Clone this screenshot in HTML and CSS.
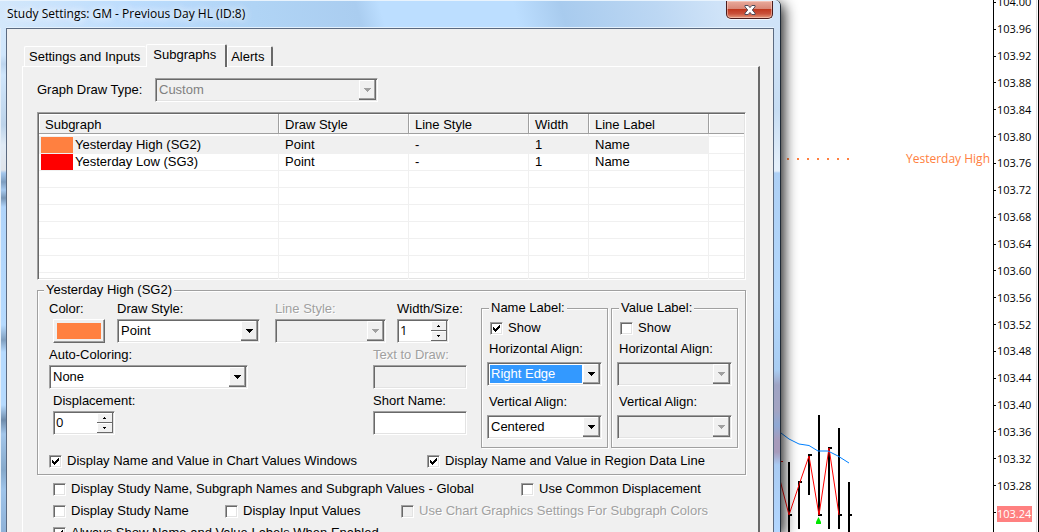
FILE: index.html
```html
<!DOCTYPE html>
<html lang="en">
<head>
    <meta charset="UTF-8">
    <meta name="viewport" content="width=device-width, initial-scale=1.0">
    <title>Study Settings</title>
    <link rel="stylesheet" href="styles.css">
</head>
<body>
    <main class="dialog">
        <header class="title-bar">
            <h1>Study Settings: GM - Previous Day HL (ID:8)</h1>
            <button class="close-btn" type="button" aria-label="Close">
                <svg width="12" height="10" viewBox="0 0 12 10">
                    <path d="M1 .5h3.2L6 2.6 7.8.5H11v1.3L8.3 5 11 8.2v1.3H7.8L6 7.4 4.2 9.5H1V8.2L3.7 5 1 1.8z" fill="#fff" stroke="#4c4a58"/>
                </svg>
            </button>
        </header>

        <form class="client">
            <div class="tabs" role="tablist">
                <button class="tab" type="button" role="tab">Settings and Inputs</button>
                <button class="tab active" type="button" role="tab" aria-selected="true">Subgraphs</button>
                <button class="tab" type="button" role="tab">Alerts</button>
            </div>

            <div class="tab-page">
                <div class="draw-type">
                    <label for="graphDrawType">Graph Draw Type:</label>
                    <select id="graphDrawType" disabled><option>Custom</option></select>
                </div>

                <div class="list-view">
                    <table>
                        <colgroup>
                            <col class="col-name"><col class="col-draw"><col class="col-line"><col class="col-width"><col class="col-label"><col>
                        </colgroup>
                        <thead>
                            <tr><th>Subgraph</th><th>Draw Style</th><th>Line Style</th><th>Width</th><th>Line Label</th><th></th></tr>
                        </thead>
                        <tbody>
                            <tr class="gap"><td></td><td></td><td></td><td></td><td></td><td></td></tr>
                            <tr class="selected"><td><span class="swatch high"></span>Yesterday High (SG2)</td><td>Point</td><td>-</td><td>1</td><td>Name</td><td></td></tr>
                            <tr><td><span class="swatch low"></span>Yesterday Low (SG3)</td><td>Point</td><td>-</td><td>1</td><td>Name</td><td></td></tr>
                            <tr><td></td><td></td><td></td><td></td><td></td><td></td></tr>
                            <tr><td></td><td></td><td></td><td></td><td></td><td></td></tr>
                            <tr><td></td><td></td><td></td><td></td><td></td><td></td></tr>
                            <tr><td></td><td></td><td></td><td></td><td></td><td></td></tr>
                            <tr><td></td><td></td><td></td><td></td><td></td><td></td></tr>
                            <tr><td></td><td></td><td></td><td></td><td></td><td></td></tr>
                            <tr><td></td><td></td><td></td><td></td><td></td><td></td></tr>
                        </tbody>
                    </table>
                </div>

                <fieldset class="subgraph">
                    <legend>Yesterday High (SG2)</legend>
                    <div class="settings">
                        <div class="fields">
                            <div class="field">
                                <label for="color">Color:</label>
                                <button id="color" class="color-btn indent" type="button"></button>
                            </div>
                            <div class="field draw-style">
                                <label for="drawStyle">Draw Style:</label>
                                <select id="drawStyle"><option>Point</option></select>
                            </div>
                            <div class="field line-style disabled">
                                <label for="lineStyle">Line Style:</label>
                                <select id="lineStyle" disabled><option></option></select>
                            </div>
                            <div class="field">
                                <label for="widthSize">Width/Size:</label>
                                <input id="widthSize" class="spin narrow" type="number" value="1">
                            </div>
                            <div class="field auto-coloring">
                                <label for="autoColoring">Auto-Coloring:</label>
                                <select id="autoColoring"><option>None</option></select>
                            </div>
                            <div class="field text-field disabled">
                                <label for="textToDraw">Text to Draw:</label>
                                <input id="textToDraw" type="text" disabled>
                            </div>
                            <div class="field displacement">
                                <label for="displacement" class="indent">Displacement:</label>
                                <input id="displacement" class="spin indent" type="number" value="0">
                            </div>
                            <div class="field text-field">
                                <label for="shortName">Short Name:</label>
                                <input id="shortName" type="text">
                            </div>
                        </div>

                        <fieldset class="label-box">
                            <legend>Name Label:</legend>
                            <label class="check"><input type="checkbox" checked>Show</label>
                            <div class="field">
                                <label for="nameHorizontal">Horizontal Align:</label>
                                <select id="nameHorizontal" class="focused"><option>Right Edge</option></select>
                            </div>
                            <div class="field">
                                <label for="nameVertical">Vertical Align:</label>
                                <select id="nameVertical"><option>Centered</option></select>
                            </div>
                        </fieldset>

                        <fieldset class="label-box">
                            <legend>Value Label:</legend>
                            <label class="check"><input type="checkbox">Show</label>
                            <div class="field">
                                <label for="valueHorizontal">Horizontal Align:</label>
                                <select id="valueHorizontal" disabled><option></option></select>
                            </div>
                            <div class="field">
                                <label for="valueVertical">Vertical Align:</label>
                                <select id="valueVertical" disabled><option></option></select>
                            </div>
                        </fieldset>
                    </div>
                    <div class="display-options">
                        <label class="check"><input type="checkbox" checked>Display Name and Value in Chart Values Windows</label>
                        <label class="check"><input type="checkbox" checked>Display Name and Value in Region Data Line</label>
                    </div>
                </fieldset>

                <div class="study-options">
                    <label class="check global"><input type="checkbox">Display Study Name, Subgraph Names and Subgraph Values - Global</label>
                    <label class="check"><input type="checkbox">Use Common Displacement</label>
                    <label class="check"><input type="checkbox">Display Study Name</label>
                    <label class="check"><input type="checkbox">Display Input Values</label>
                    <label class="check graphics disabled"><input type="checkbox" disabled>Use Chart Graphics Settings For Subgraph Colors</label>
                    <label class="check global"><input type="checkbox" checked>Always Show Name and Value Labels When Enabled</label>
                </div>
            </div>
        </form>
    </main>

    <section class="chart">
        <svg class="plot" width="212" height="532" viewBox="0 0 212 532">
            <!-- price bars with closing ticks -->
            <path d="M7.500 462v70M17.500 482v47M27.500 455v40M37.500 415v101M47.500 448v81M57.500 428v101M67.500 482v50M7 515h4M17 482h4M27 455h4M37 515h4M47 448h4M57 515h4M67 515h4" stroke="#000" stroke-width="2" fill="none" shape-rendering="crispEdges"/>
            <path d="M-1 480L8 515 19 482 28 456 38 515 48 448 58 515M0 461.500h2" stroke="#f00" fill="none"/>
            <path d="M0 433l8 6 10 5 10 1.500 9 5.500h10l10 5 11 7" stroke="#0080ff" fill="none"/>
            <path d="M37.500 517l2.500 5v2h-5v-2z" fill="#00e600"/>
            <!-- yesterday high points -->
            <path d="M6 159h64" stroke="#ff8040" stroke-width="2" stroke-dasharray="2 8" fill="none"/>
            <text x="209" y="163" text-anchor="end">Yesterday High</text>
        </svg>
        <ul class="price-axis">
            <li>104.00</li>
            <li>103.96</li>
            <li>103.92</li>
            <li>103.88</li>
            <li>103.84</li>
            <li>103.80</li>
            <li>103.76</li>
            <li>103.72</li>
            <li>103.68</li>
            <li>103.64</li>
            <li>103.60</li>
            <li>103.56</li>
            <li>103.52</li>
            <li>103.48</li>
            <li>103.44</li>
            <li>103.40</li>
            <li>103.36</li>
            <li>103.32</li>
            <li>103.28</li>
            <li><span class="last-price">103.24</span></li>
        </ul>
    </section>
</body>
</html>
```
FILE: styles.css
```css
* {
    box-sizing: border-box;
}
body {
    display: flex;
    height: 100vh;
    margin: 0;
    overflow: hidden;
    background: #fff;
    color: #000;
    font: 13px/16px "Liberation Sans", Arial, sans-serif;
}
button, input, select {
    font: inherit;
    color: inherit;
    margin: 0;
}

/* Window frame */
.dialog {
    position: relative;
    z-index: 1;
    flex: 1;
    min-width: 0;
    display: flex;
    flex-direction: column;
    padding: 0 6px;
    border-right: 1px solid #1f2a36;
    border-top-right-radius: 6px;
    background:
        linear-gradient(#e4eef8, #e4eef8) left / 1px 100% no-repeat,
        linear-gradient(#d0e3f7 0, #cfe2f6 50px, #c6dcf2 110px, #e4effa 165px, #e4effa 171px, #aed0f5 173px, #b3d7fb 300px, #a9cdf2 370px, #9fa4c4 385px, #a3a4c2 410px, #8fa9d4 425px, #a79bbb 440px, #a79bbb 452px, #a9cbf2 465px, #b3d7ff) right / 7px 100% no-repeat,
        linear-gradient(#d6e9fb 0, #d0e6fc 55px, #bdd5ee 64px, #d0e6fc 75px, #c3d9ef 110px, #bcd3ea 125px, #e0ebf6 145px, #e0e4ea 170px, #a3c6ec 173px, #7d9dbf 182px, #a6c9ee 190px, #7896b6 198px, #b0d4fa 207px, #b6dafe 325px, #809fbf 340px, #b6dafe 352px, #b6dafe 405px, #6f8cab 420px, #a3c6ea 434px, #86a9cb 470px, #9fc4ea 490px, #8fb2d8 100%) left / 7px 100% no-repeat,
        #bbdcfd;
    box-shadow: 3px 4px 14px rgba(0, 0, 0, 0.9);
}
.title-bar {
    flex: none;
    display: flex;
    justify-content: space-between;
    align-items: flex-start;
    height: 28px;
    margin: 0 -6px;
    padding: 0 7px;
    border-top: 1px solid #e8f3fd;
    border-top-right-radius: 6px;
    background: linear-gradient(75deg, #d4e8fb 0, #bbdcfd 18%, #b0d4f5 33%, #aacdf0 46%, #bcdeff 49%, #bcdeff 66%, #a8cbee 72%, #bcd7f3 84%, #cfe3f8 92%);
}
.title-bar h1 {
    margin: 0;
    font: 12px/25px "Open Sans", sans-serif;
    text-shadow: 0 0 8px #fff, 0 0 8px #fff;
}
.close-btn {
    display: flex;
    justify-content: center;
    align-items: center;
    width: 47px;
    height: 18px;
    padding: 0;
    border: 1px solid #4a1c1c;
    border-top: 0;
    border-radius: 0 0 5px 5px;
    background: linear-gradient(#e9aa9c 0, #d98878 45%, #c0391f 50%, #c9513a 75%, #e39a7c 100%);
    box-shadow: inset 0 0 0 1px rgba(255, 220, 210, 0.5), 0 1px 0 #f4faff;
}
.client {
    flex: 1;
    min-height: 0;
    display: flex;
    flex-direction: column;
    padding: 15px 13px 0 15px;
    overflow: hidden;
    border: 1px solid #5b6a80;
    border-bottom: 0;
    background: #f0f0f0;
    box-shadow: 0 -1px 0 #e4f1fd;
}

/* Tabs */
.tabs {
    flex: none;
    display: flex;
    align-items: flex-end;
    padding-left: 2px;
}
.tab {
    height: 20px;
    padding: 0 7px 0 3px;
    border: 1px solid #fff;
    border-right: 2px solid #696969;
    border-bottom: 0;
    border-radius: 2px 2px 0 0;
    background: #f0f0f0;
    white-space: nowrap;
}
.tab:first-child {
    padding: 0 6px 0 4px;
    border-right: 0;
}
.tab.active {
    position: relative;
    height: 23px;
    margin-bottom: -1px;
    padding: 0 9px 2px 6px;
}
.tab-page {
    flex: 1;
    min-height: 0;
    padding: 11px 12px 0 14px;
    border: 1px solid #fff;
    border-right: 2px solid #696969;
    border-bottom: 0;
}

/* Sunken controls */
select, input, .list-view {
    appearance: none;
    border: 1px solid;
    border-color: #a0a0a0 #fff #fff #a0a0a0;
    border-radius: 0;
    background-color: #fff;
    box-shadow: inset 1px 1px 0 #696969, inset -1px -1px 0 #e3e3e3;
}
select, input {
    width: 100%;
    height: 24px;
    padding: 0 20px 0 3px;
}
select {
    background: url("data:image/svg+xml,%3Csvg xmlns='http://www.w3.org/2000/svg' width='17' height='20' shape-rendering='crispEdges'%3E%3Cpath d='M0 0h17v20H0z' fill='%23696969'/%3E%3Cpath d='M0 0h16v19H0z' fill='%23a0a0a0'/%3E%3Cpath d='M0 0h15v18H0z' fill='%23fff'/%3E%3Cpath d='M1 1h14v17H1z' fill='%23f0f0f0'/%3E%3Cpath d='M5 8h7v1H5zM6 9h5v1H6zM7 10h3v1H7zM8 11h1v1H8z'/%3E%3C/svg%3E") right 1px top 1px no-repeat #fff;
}
select:disabled {
    background: url("data:image/svg+xml,%3Csvg xmlns='http://www.w3.org/2000/svg' width='17' height='20' shape-rendering='crispEdges'%3E%3Cpath d='M0 0h17v20H0z' fill='%23696969'/%3E%3Cpath d='M0 0h16v19H0z' fill='%23a0a0a0'/%3E%3Cpath d='M0 0h15v18H0z' fill='%23fff'/%3E%3Cpath d='M1 1h14v17H1z' fill='%23f0f0f0'/%3E%3Cpath d='M5 8h7v1H5zM6 9h5v1H6zM7 10h3v1H7zM8 11h1v1H8z' fill='%23a0a0a0'/%3E%3C/svg%3E") right 1px top 1px no-repeat #f0f0f0;
    color: #808080;
    opacity: 1;
}
select.focused {
    background:
        url("data:image/svg+xml,%3Csvg xmlns='http://www.w3.org/2000/svg' width='17' height='20' shape-rendering='crispEdges'%3E%3Cpath d='M0 0h17v20H0z' fill='%23696969'/%3E%3Cpath d='M0 0h16v19H0z' fill='%23a0a0a0'/%3E%3Cpath d='M0 0h15v18H0z' fill='%23fff'/%3E%3Cpath d='M1 1h14v17H1z' fill='%23f0f0f0'/%3E%3Cpath d='M5 8h7v1H5zM6 9h5v1H6zM7 10h3v1H7zM8 11h1v1H8z'/%3E%3C/svg%3E") right 1px top 1px no-repeat,
        linear-gradient(#39f, #39f) 2px 2px / calc(100% - 21px) 18px no-repeat #fff;
    color: #fff;
}
input:disabled {
    background-color: #f0f0f0;
}
input.spin {
    width: 62px;
    background: url("data:image/svg+xml,%3Csvg xmlns='http://www.w3.org/2000/svg' width='16' height='20' shape-rendering='crispEdges'%3E%3Cpath d='M0 0h16v20H0z' fill='%23696969'/%3E%3Cpath d='M0 0h15v9H0zM0 10h15v9H0z' fill='%23fff'/%3E%3Cpath d='M1 1h14v8H1zM1 11h14v8H1z' fill='%23f0f0f0'/%3E%3Cpath d='M7 4h1v1H7zM6 5h3v1H6zM6 14h3v1H6zM7 15h1v1H7z'/%3E%3C/svg%3E") right 1px top 1px no-repeat #fff;
    padding: 0 18px 2px 2px;
    font-family: "Open Sans", sans-serif;
}
input.spin.narrow {
    width: 52px;
}
input.spin::-webkit-inner-spin-button {
    appearance: none;
}
.check {
    display: flex;
    align-items: center;
    gap: 5px;
    white-space: nowrap;
}
.check input {
    flex: none;
    width: 13px;
    height: 13px;
    padding: 0;
}
.check input:checked {
    background-image: url("data:image/svg+xml,%3Csvg xmlns='http://www.w3.org/2000/svg' width='11' height='11' shape-rendering='crispEdges'%3E%3Cpath d='M2 4h1v3H2zM3 5h1v3H3zM4 6h1v3H4zM5 5h1v3H5zM6 4h1v3H6zM7 3h1v3H7zM8 2h1v3H8z'/%3E%3C/svg%3E");
}
.disabled {
    color: #a0a0a0;
    text-shadow: 1px 1px 0 #fff;
}
.indent {
    margin-left: 4px;
}

.draw-type {
    display: flex;
    align-items: center;
    height: 24px;
}
.draw-type label {
    width: 118px;
}
.draw-type select {
    width: 223px;
}

/* Subgraph list */
.list-view {
    height: 168px;
    margin-top: 10px;
    padding: 1px;
    overflow: hidden;
}
table {
    width: 100%;
    table-layout: fixed;
    border-collapse: separate;
    border-spacing: 0;
}
.col-name { width: 240px; }
.col-draw { width: 130px; }
.col-line { width: 120px; }
.col-width { width: 60px; }
.col-label { width: 120px; }
th {
    height: 20px;
    padding: 2px 0 0 6px;
    border-right: 1px solid #a0a0a0;
    border-bottom: 1px solid #a0a0a0;
    background: #f0f0f0;
    font-weight: normal;
    line-height: 16px;
    text-align: left;
    box-shadow: inset 1px 1px 0 #fff;
}
td {
    height: 17px;
    padding: 0 0 0 6px;
    border-right: 1px solid #f0f0f0;
    border-bottom: 1px solid #f0f0f0;
    line-height: 16px;
    white-space: nowrap;
}
th:last-child, td:last-child {
    border-right: 0;
}
td:first-child {
    padding-left: 2px;
}
.gap td {
    height: 3px;
}
.selected td:not(:last-child) {
    background: #f0f0f0;
}
.swatch {
    display: inline-block;
    width: 32px;
    height: 16px;
    margin-right: 2px;
    vertical-align: top;
}
.high { background: #ff8040; }
.low { background: #f00; }

/* Group boxes */
fieldset {
    min-width: 0;
    margin: 0;
    border: 1px solid #a0a0a0;
    box-shadow: 1px 1px 0 #fff, inset 1px 1px 0 #fff;
}
legend {
    padding: 0 2px;
    background: #f0f0f0;
}
.subgraph {
    margin-top: 2px;
    padding: 2px 7px 5px 11px;
}
.subgraph > legend {
    margin-left: -5px;
}
.settings {
    display: flex;
    gap: 3px;
}
.fields {
    flex: 1;
    display: grid;
    grid-template-columns: 68px 158px 98px 24px 1fr;
    align-content: start;
    row-gap: 4px;
    padding-top: 1px;
}
.field {
    display: flex;
    flex-direction: column;
    gap: 2px;
    white-space: nowrap;
}
.draw-style select { width: 143px; }
.line-style { grid-column: span 2; }
.line-style select { width: 111px; }
.auto-coloring { grid-column: span 3; }
.auto-coloring select { width: 199px; }
.displacement { grid-column: span 3; }
.text-field { grid-column: span 2; }
.text-field input { width: 94px; }
.color-btn {
    width: 52px;
    height: 24px;
    padding: 0;
    border: 1px solid;
    border-color: #fff #696969 #696969 #fff;
    background: linear-gradient(#ff8040, #ff8040) 3px 3px / 44px 16px no-repeat #f0f0f0;
    box-shadow: inset -1px -1px 0 #a0a0a0;
}
.label-box {
    display: flex;
    flex-direction: column;
    flex: 0 0 127px;
    padding: 4px 5px 8px;
}
.label-box > legend {
    margin-left: 2px;
}
.label-box .check {
    margin-left: 3px;
}
.label-box .field {
    gap: 5px;
    margin-top: 5px;
}
.label-box .field label {
    padding-left: 2px;
}
.label-box .field + .field {
    margin-top: 8px;
}
.display-options {
    display: grid;
    grid-template-columns: 378px 1fr;
    margin-top: 5px;
}
.study-options {
    display: grid;
    grid-template-columns: 172px 176px 120px 1fr;
    grid-auto-rows: 22px;
    margin-top: 3px;
    padding-left: 16px;
}
.global {
    grid-column: span 3;
}
.graphics {
    grid-column: span 2;
}

/* Price chart behind the dialog */
.chart {
    flex: 0 0 258px;
    display: flex;
    border-right: 1px solid #000;
}
.plot {
    flex: none;
}
.plot text {
    fill: #ff8040;
    font: 12px "Open Sans", sans-serif;
}
.price-axis {
    flex: 1;
    display: flex;
    flex-direction: column;
    margin: 0 1px 0 0;
    padding: 0;
    border-left: 1px solid #000;
    border-right: 1px solid #dcdcdc;
    list-style: none;
    font: 11px/16px "Open Sans", sans-serif;
}
.price-axis li {
    flex: 1;
    display: flex;
    align-items: center;
    gap: 1px;
}
.price-axis li:first-child {
    margin-top: -11px;
}
.price-axis li:last-child {
    margin-bottom: 6px;
}
.price-axis li::before {
    content: "";
    width: 2px;
    height: 1px;
    background: #000;
}
.last-price {
    position: relative;
    top: 2px;
    padding-right: 1px;
    background: #ff8080;
    color: #fff;
}
```
